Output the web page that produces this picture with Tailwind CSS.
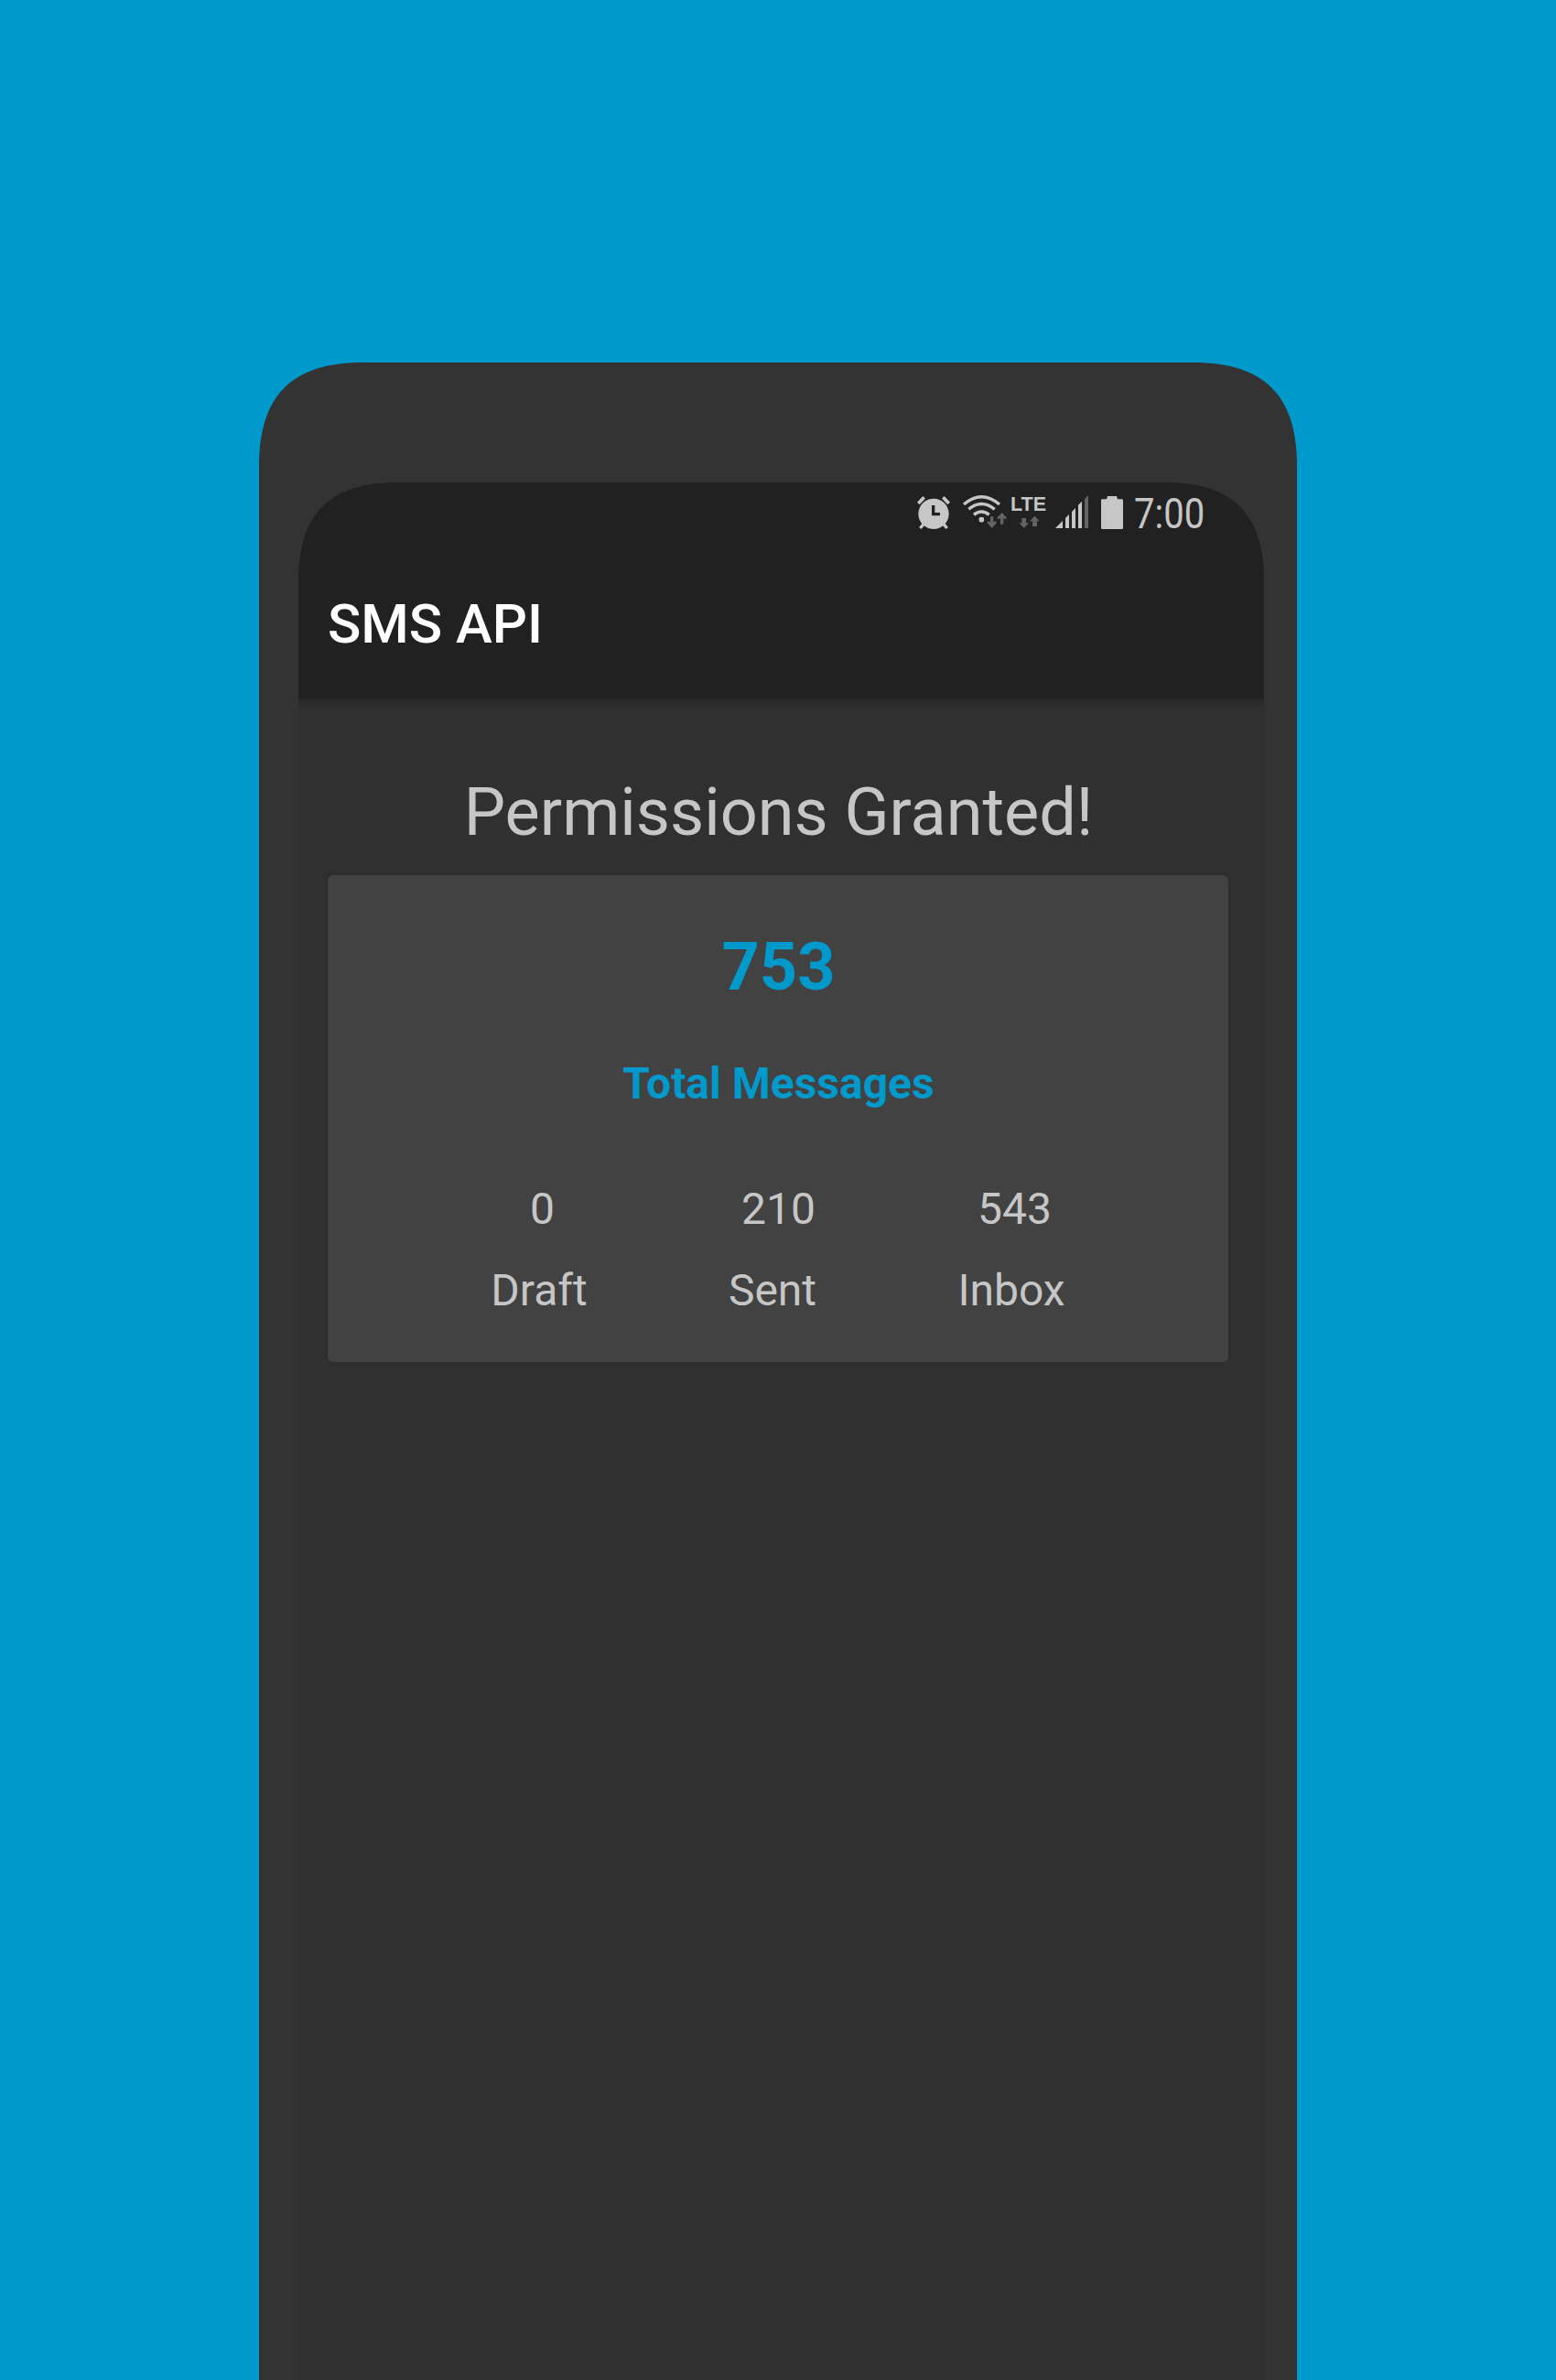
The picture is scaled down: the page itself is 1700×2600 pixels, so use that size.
<!DOCTYPE html>
<html lang="en">
<head>
<meta charset="utf-8">
<title>SMS API</title>
<script src="https://cdn.jsdelivr.net/npm/@tailwindcss/browser@4"></script>
</head>
<body class="bg-[#0099cc] h-[2600px] w-[1700px] overflow-hidden pt-[396px] font-[Roboto,sans-serif] text-[#c6c6c6]">
<main class="ml-[283px] h-[2204px] w-[1134px] bg-[#333333] pl-[43px] pt-[131px] [clip-path:path('M0_2204V113C0_36_36_0_113_0H1021C1098_0_1134_36_1134_113V2204Z')]">
  <div class="h-[2073px] w-[1055px] bg-[#303030] [clip-path:path('M0_2073V109C0_34_34_0_109_0H946C1021_0_1055_34_1055_109V2073Z')]">
    <header class="h-[236px] bg-[#212121]">
      <div class="flex h-[66px] items-start pl-[674px] pt-[13px]">
        <svg class="h-10 w-10" viewBox="60 60 120 120" fill="none" stroke="#c6c6c6">
          <circle cx="120" cy="124" r="50" fill="#c6c6c6" stroke="none"/>
          <path d="M70 90L89 70M151 70L170 90" stroke-width="11"/>
          <path d="M87 158L76 171M153 158L164 171" stroke-width="10"/>
          <path d="M119 96V125H141" stroke="#212121" stroke-width="10"/>
        </svg>
        <svg class="ml-[10px] h-10 w-[50px]" viewBox="210 60 150 120" fill="none" stroke="#c6c6c6" stroke-width="10">
          <path d="M219 93Q277 43 336 93M235 109Q277 74 320 109M252 127Q277 107 302 127"/>
          <circle cx="277" cy="143" r="8.500" fill="#c6c6c6" stroke="none"/>
          <path d="M306 133H316V151L323 148L327 153L311 171L295 153L299 148L306 151ZM339 158H349V139L356 142L360 137L344 120L328 137L332 142L339 139Z" fill="#636363" stroke="none"/>
        </svg>
        <div class="ml-1 w-10">
          <div class="h-[22px] font-['Liberation_Sans',sans-serif] text-[21.500px] font-bold leading-[23px]">LTE</div>
          <svg class="h-[18px] w-10" viewBox="372 126 120 54" fill="#636363"><path d="M409 138H423V154H432L416 171L400 154H409ZM444 165H459V148H467L451 131L435 148H444Z"/></svg>
        </div>
        <svg class="ml-2 h-10 w-10" viewBox="36 60 120 120" fill="#c6c6c6">
          <path d="M39 171L63 147V171ZM72 171V138L84 126V171ZM93 171V117L105 105V171ZM114 171V95L126 83V171Z"/>
          <path d="M135 171V75L147 63V171Z" fill="#636363"/>
        </svg>
        <svg class="ml-2 h-10 w-[30px]" viewBox="180 60 90 120" fill="#c6c6c6"><path d="M207 76L210 66H240L243 76H257Q261 76 261 80V170Q261 174 257 174H193Q189 174 189 170V80Q189 76 193 76Z"/></svg>
        <span class="ml-[9px] origin-left scale-x-[0.870] text-[46px] leading-[43px]">7:00</span>
      </div>
      <h1 class="pl-[32px] pt-[53px] text-[60px] font-medium leading-[72px] text-white">SMS API</h1>
    </header>
    <div class="h-3 bg-linear-to-b from-[#262626] to-[#303030]"></div>
    <section class="w-[1049px] pt-[71px] text-center">
      <h2 class="text-[72px] leading-[84px]">Permissions Granted!</h2>
      <div class="ml-8 mt-[26px] h-[532px] w-[984px] rounded-[6px] bg-[#424242] pl-px pt-[59px] shadow-[0_-1px_4px_rgba(0,0,0,0.180)]">
        <div class="text-[72px] font-bold leading-[84px] text-[#0099cc]">753</div>
        <div class="mt-[57px] text-[48px] font-bold leading-[56px] text-[#0099cc]">Total Messages</div>
        <div class="mx-auto mt-[81px] grid w-[774px] grid-cols-3 text-[48px] leading-[56px]">
          <span>0</span><span>210</span><span>543</span>
        </div>
        <div class="ml-[101px] mt-[33px] grid grid-cols-[258px_252px_270px] text-[48px] leading-[56px]">
          <span>Draft</span><span>Sent</span><span>Inbox</span>
        </div>
      </div>
    </section>
  </div>
</main>
</body>
</html>
